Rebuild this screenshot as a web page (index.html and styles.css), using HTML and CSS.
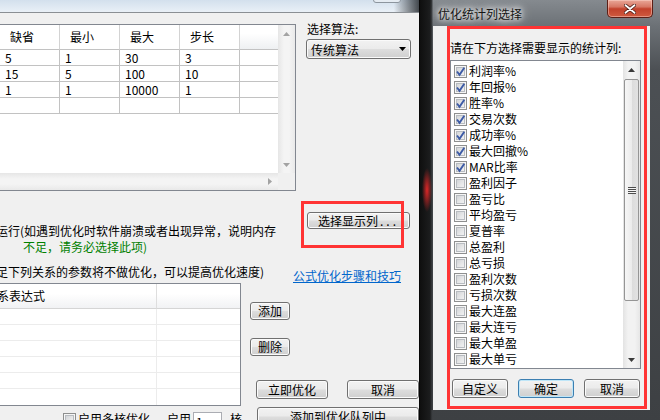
FILE: index.html
```html
<!DOCTYPE html>
<html lang="zh-CN">
<head>
<meta charset="utf-8">
<title>优化统计列选择</title>
<link rel="stylesheet" href="styles.css">
</head>
<body>
<div class="main">
  <div class="mtitle"><span class="mbtn"></span></div>
  <div class="sec1">
    <div class="grid1">
      <div class="pgrid">
        <div class="hc">缺省</div><div class="hc">最小</div><div class="hc">最大</div><div class="hc">步长</div><div class="hc hfill"></div>
        <div class="dc">5</div><div class="dc">1</div><div class="dc">30</div><div class="dc">3</div><div class="dc dl"></div>
        <div class="dc">15</div><div class="dc">5</div><div class="dc">100</div><div class="dc">10</div><div class="dc dl"></div>
        <div class="dc">1</div><div class="dc">1</div><div class="dc">10000</div><div class="dc">1</div><div class="dc dl"></div>
        <div class="dc"></div><div class="dc"></div><div class="dc"></div><div class="dc"></div><div class="dc dl"></div>
      </div>
      <div class="vsb">
        <span class="sbb"><svg width="7" height="4" viewBox="0 0 7 4"><path d="M0 4H7L3.5 0Z" fill="currentColor"/></svg></span>
        <span class="sbb"><svg width="7" height="4" viewBox="0 0 7 4"><path d="M0 0H7L3.5 4Z" fill="currentColor"/></svg></span>
      </div>
      <div class="hsb">
        <span class="sbb"><svg width="4" height="7" viewBox="0 0 4 7"><path d="M0 0V7L4 3.5Z" fill="currentColor"/></svg></span>
      </div>
      <div class="corner"></div>
    </div>
    <div class="algo">
      <div class="albl">选择算法:</div>
      <div class="combo"><span>传统算法</span><svg class="carr" width="7" height="4" viewBox="0 0 7 4"><path d="M0 0H7L3.5 4Z" fill="#000"/></svg></div>
    </div>
  </div>

  <div class="sec2">
    <div class="notes">
      <div class="n1">运行(如遇到优化时软件崩溃或者出现异常，说明内存</div>
      <div class="n2">不足，请务必选择此项)</div>
      <div class="n3">足下列关系的参数将不做优化，可以提高优化速度)</div>
    </div>
    <div class="side">
      <div class="btn colsel">选择显示列<span class="dots">...</span></div>
      <a class="link">公式优化步骤和技巧</a>
    </div>
    <div class="redbox rb1"></div>
  </div>

  <div class="sec3">
    <div class="grid2">
      <div class="h2 c1"><span class="ht">系表达式</span></div><div class="h2"></div>
      <div class="b2 c1"></div><div class="b2"></div>
      <div class="b2 c1"></div><div class="b2"></div>
      <div class="b2 c1"></div><div class="b2"></div>
      <div class="b2 c1"></div><div class="b2"></div>
      <div class="b2 c1"></div><div class="b2"></div>
      <div class="b2 c1 last"></div><div class="b2 last"></div>
    </div>
    <div class="ops">
      <div class="btn b40 add">添加</div>
      <div class="btn b40 del">删除</div>
      <div class="oprow">
        <div class="btn b72">立即优化</div>
        <div class="btn b72">取消</div>
      </div>
    </div>
  </div>

  <div class="brow">
    <span class="cb mc"></span>
    <span class="bt1">启用多核优化</span>
    <span class="bt2">启用</span>
    <span class="inp">1</span>
    <span class="bt3">核</span>
    <div class="btn queue">添加到优化队列中</div>
  </div>
</div>

<div class="dlg">
  <div class="dtitle">
    <span class="dttl">优化统计列选择</span>
    <span class="dclose"><svg width="12" height="10" viewBox="0 0 12 10"><path d="M1.5 1.2L10.5 8.8M10.5 1.2L1.5 8.8" stroke="#4a1c14" stroke-width="3.4" stroke-linecap="round"/><path d="M1.5 1.2L10.5 8.8M10.5 1.2L1.5 8.8" stroke="#fff" stroke-width="1.8" stroke-linecap="round"/></svg></span>
  </div>
  <div class="dclient">
    <div class="dlbl">请在下方选择需要显示的统计列:</div>
    <div class="lst">
      <div class="items">
        <div class="it"><span class="cb"><svg width="11" height="11" viewBox="0 0 11 11"><path d="M2 5.5L4.5 8.8L9.3 1.8" stroke="#3d5ba6" stroke-width="1.9" fill="none"/></svg></span>利润率%</div>
        <div class="it"><span class="cb"><svg width="11" height="11" viewBox="0 0 11 11"><path d="M2 5.5L4.5 8.8L9.3 1.8" stroke="#3d5ba6" stroke-width="1.9" fill="none"/></svg></span>年回报%</div>
        <div class="it"><span class="cb"><svg width="11" height="11" viewBox="0 0 11 11"><path d="M2 5.5L4.5 8.8L9.3 1.8" stroke="#3d5ba6" stroke-width="1.9" fill="none"/></svg></span>胜率%</div>
        <div class="it"><span class="cb"><svg width="11" height="11" viewBox="0 0 11 11"><path d="M2 5.5L4.5 8.8L9.3 1.8" stroke="#3d5ba6" stroke-width="1.9" fill="none"/></svg></span>交易次数</div>
        <div class="it"><span class="cb"><svg width="11" height="11" viewBox="0 0 11 11"><path d="M2 5.5L4.5 8.8L9.3 1.8" stroke="#3d5ba6" stroke-width="1.9" fill="none"/></svg></span>成功率%</div>
        <div class="it"><span class="cb"><svg width="11" height="11" viewBox="0 0 11 11"><path d="M2 5.5L4.5 8.8L9.3 1.8" stroke="#3d5ba6" stroke-width="1.9" fill="none"/></svg></span>最大回撤%</div>
        <div class="it"><span class="cb"><svg width="11" height="11" viewBox="0 0 11 11"><path d="M2 5.5L4.5 8.8L9.3 1.8" stroke="#3d5ba6" stroke-width="1.9" fill="none"/></svg></span>MAR比率</div>
        <div class="it"><span class="cb"></span>盈利因子</div>
        <div class="it"><span class="cb"></span>盈亏比</div>
        <div class="it"><span class="cb"></span>平均盈亏</div>
        <div class="it"><span class="cb"></span>夏普率</div>
        <div class="it"><span class="cb"></span>总盈利</div>
        <div class="it"><span class="cb"></span>总亏损</div>
        <div class="it"><span class="cb"></span>盈利次数</div>
        <div class="it"><span class="cb"></span>亏损次数</div>
        <div class="it"><span class="cb"></span>最大连盈</div>
        <div class="it"><span class="cb"></span>最大连亏</div>
        <div class="it"><span class="cb"></span>最大单盈</div>
        <div class="it"><span class="cb"></span>最大单亏</div>
      </div>
      <div class="lsb">
        <span class="sbb"><svg width="7" height="4" viewBox="0 0 7 4"><path d="M0 4H7L3.5 0Z" fill="currentColor"/></svg></span>
        <span class="thumb"><span class="grip"></span></span>
        <span class="sbb down"><svg width="7" height="4" viewBox="0 0 7 4"><path d="M0 0H7L3.5 4Z" fill="currentColor"/></svg></span>
      </div>
    </div>
    <div class="dbtns">
      <div class="btn b56">自定义</div>
      <div class="btn b56 focus">确定</div>
      <div class="btn b56">取消</div>
    </div>
    <div class="redbox rb2"></div>
  </div>
</div>
</body>
</html>
```

FILE: styles.css
```css
* { box-sizing: border-box; margin: 0; padding: 0; }
html, body { width: 660px; height: 420px; overflow: hidden; }
body {
  font-family: "Noto Sans CJK SC", "Noto Sans", sans-serif;
  font-size: 12px;
  color: #000;
  background: #0d0d0d;
  position: relative;
}

/* ---------- main window ---------- */
.main { width: 419px; height: 420px; background: #f0f0f0; overflow: hidden; }
.mtitle {
  position: relative;
  height: 13px;
  border-bottom: 1px solid #8a8f94;
  background: linear-gradient(90deg, rgba(0,0,0,0) 0, rgba(0,0,0,0) 94%, rgba(40,44,48,.85) 100%),
              linear-gradient(180deg, #d3e0ed 0, #e9f0f7 100%);
}
.mbtn {
  position: absolute; left: 373px; top: -4px; width: 28px; height: 7px;
  border: 1px solid #8c959e; border-radius: 3px; background: #e4ebf2;
}

.sec1 { display: flex; margin-top: 11px; height: 167px; }
.grid1 {
  width: 297px; height: 167px; margin-left: -1px;
  border: 1px solid #828790; background: #fff;
  display: grid; grid-template-columns: 278px 17px; grid-template-rows: 148px 17px;
}
.pgrid {
  display: grid;
  grid-template-columns: 60px 60px 60px 60px 38px;
  grid-template-rows: 25px repeat(4, 16px);
  align-content: start;
}
.hc {
  border-right: 1px solid #d3d3d3; border-bottom: 1px solid #c2c2c2;
  padding-left: 10px; line-height: 24px; white-space: nowrap;
  background: #fff;
}
.hfill { border-right: 0; background: linear-gradient(180deg, #fff 0, #fff 35%, #eef0f2 100%); }
.dc {
  border-right: 1px solid #c2c2c2; border-bottom: 1px solid #c2c2c2;
  padding-left: 5px; line-height: 15px; white-space: nowrap;
}
.dl { border-right: 0; }

.vsb {
  display: flex; flex-direction: column; justify-content: space-between;
  background: linear-gradient(90deg, #e6e6e6, #f4f4f4 35%, #f4f4f4 65%, #e9e9e9);
}
.hsb {
  display: flex; justify-content: flex-end;
  background: linear-gradient(180deg, #e6e6e6, #f4f4f4 35%, #f4f4f4 65%, #e9e9e9);
}
.sbb { width: 17px; height: 17px; display: flex; align-items: center; justify-content: center; color: #a3a3a3; }
.corner { background: #f0f0f0; }

.algo { margin-left: 10px; }
.albl { margin-top: -2px; padding-left: 1px; line-height: 14px; }
.combo {
  margin-top: 3px; width: 105px; height: 20px;
  display: flex; align-items: center; padding-left: 4px;
  border: 1px solid #707070; border-radius: 3px;
  background: linear-gradient(180deg, #f2f2f2 0, #ebebeb 48%, #dddddd 52%, #cfcfcf 100%);
  box-shadow: inset 0 0 0 1px #fafafa;
}
.carr { margin-left: auto; margin-right: 4px; }

/* ---------- buttons ---------- */
.btn {
  display: flex; align-items: center; justify-content: center;
  border: 1px solid #707070; border-radius: 3px;
  background: linear-gradient(180deg, #f2f2f2 0, #ebebeb 48%, #dddddd 52%, #cfcfcf 100%);
  box-shadow: inset 0 0 0 1px #fbfbfb;
  line-height: 14px; white-space: nowrap;
}
.btn.focus { border-color: #3c7fb1; box-shadow: inset 0 0 0 1px #bfe6f8; }

/* ---------- middle section ---------- */
.sec2 { position: relative; height: 92px; display: flex; }
.notes { width: 297px; margin-left: -4px; white-space: nowrap; line-height: 16px; }
.n1 { margin-top: 32px; }
.n2 { padding-left: 27px; color: #008000; }
.n3 { margin-top: 9px; }
.side { display: flex; flex-direction: column; align-items: flex-start; }
.colsel { margin-top: 21px; margin-left: 14px; width: 103px; height: 19px; }
.dots { letter-spacing: 3px; margin-left: 2px; }
.link { display: block; margin-top: 40px; line-height: 14px; color: #0066cc; text-decoration: underline; white-space: nowrap; }
.redbox { position: absolute; border: 3px solid #ff3434; }
.rb1 { left: 301px; top: 10px; width: 103px; height: 47px; }

/* ---------- lower section ---------- */
.sec3 { display: flex; height: 123px; }
.grid2 {
  width: 242px; height: 123px; margin-left: -1px;
  border: 1px solid #828790; background: #fff;
  display: grid; grid-template-columns: 157px 83px;
  grid-template-rows: 25px repeat(6, 16px);
}
.h2 {
  border-bottom: 1px solid #d5d5d5;
  background: linear-gradient(180deg, #ffffff 0, #ffffff 40%, #f1f2f4 100%);
  line-height: 23px; white-space: nowrap;
}
.h2.c1 { border-right: 1px solid #dedede; }
.ht { margin-left: -3px; }
.b2 { border-bottom: 1px solid #ececec; }
.b2.c1 { border-right: 1px solid #ececec; }
.b2.last { border-bottom: 0; }

.ops { margin-left: 9px; display: flex; flex-direction: column; align-items: flex-start; }
.b40 { width: 40px; height: 18px; }
.add { margin-top: 19px; }
.del { margin-top: 18px; }
.oprow { display: flex; gap: 19px; margin-top: 24px; margin-left: 6px; }
.b72 { width: 72px; height: 19px; }

.brow { display: flex; align-items: flex-start; height: 14px; }
.cb {
  flex: none; width: 13px; height: 13px;
  border: 1px solid #8e8f8f;
  background: linear-gradient(135deg, #c9ccd0 0, #e6e7e8 55%, #f8f8f8 100%);
  box-shadow: inset 0 0 0 1px #f6f6f6, inset 0 0 0 2px #b8bcc1;
  display: flex; align-items: center; justify-content: center;
}
.mc { margin-left: 63px; margin-top: 7px; }
.bt1 { margin-left: 2px; margin-top: 5px; line-height: 16px; white-space: nowrap; }
.bt2 { margin-left: 17px; margin-top: 5px; line-height: 16px; white-space: nowrap; }
.inp {
  margin-left: 2px; margin-top: 6px; width: 29px; height: 20px;
  border: 1px solid #abadb3; background: #fff; padding-left: 2px; line-height: 18px;
}
.bt3 { margin-left: 8px; margin-top: 5px; line-height: 16px; }
.queue { margin-left: auto; margin-right: 0; margin-top: 1px; width: 162px; height: 19px; }

/* ---------- dialog ---------- */
.dlg {
  position: absolute; left: 419px; top: 0; width: 241px; height: 420px;
  padding: 0 10px 0 13px;
  background:
    radial-gradient(5px 22px at 7px 190px, rgba(230,40,40,.95), rgba(200,30,30,0)),
    linear-gradient(90deg, #0f0f0f 0, #1c1d1e 10px, #3a3d40 12px, rgba(0,0,0,0) 13px),
    linear-gradient(180deg, #858a8f 0, #6c7176 26px, #4c5054 70px, #3d4043 100%);
  border-left: 1px solid #050505;
}
.dtitle { height: 26px; display: flex; align-items: flex-start; }
.dttl {
  margin: 7px 0 0 5px; line-height: 14px; color: #151515; white-space: nowrap;
  text-shadow: 0 0 5px #fff, 0 0 9px rgba(255,255,255,.9), 0 0 12px rgba(255,255,255,.7);
}
.dclose {
  margin-left: auto; margin-right: -3px; width: 46px; height: 18px;
  border: 1px solid #5c1e15; border-top: 0; border-radius: 0 0 5px 5px;
  background: linear-gradient(180deg, #e9a797 0, #d77764 40%, #c2412b 52%, #cf5a3f 100%);
  box-shadow: inset 0 0 0 1px rgba(255,220,210,.45);
  display: flex; align-items: center; justify-content: center;
}
.dclient { position: relative; height: 384px; background: #f0f0f0; padding-left: 17px; }
.dlbl { padding-top: 15px; line-height: 14px; white-space: nowrap; }
.lst {
  margin-top: 5px; width: 191px; height: 309px;
  border: 1px solid #828790; background: #fff;
  display: grid; grid-template-columns: 1fr 17px;
}
.items { padding: 2px 0 0 3px; overflow: hidden; }
.it { display: flex; align-items: center; height: 16px; white-space: nowrap; line-height: 16px; }
.it .cb { margin-right: 2px; }
.lsb {
  display: flex; flex-direction: column;
  background: linear-gradient(90deg, #e3e3e3, #f2f2f2 30%, #f2f2f2 70%, #e6e6e6);
}
.lsb .sbb { color: #3a3a3a; flex: none; }
.thumb {
  margin: 1px 1px 0; height: 222px; flex: none;
  border: 1px solid #959595; border-radius: 2px;
  background: linear-gradient(90deg, #f6f6f6, #ececec 50%, #dcdcdc 52%, #e2e2e2);
  display: flex; align-items: center; justify-content: center;
}
.grip { width: 8px; height: 7px; background: repeating-linear-gradient(180deg, #4c4c4c 0 1px, #f4f4f4 1px 2px); }
.lsb .down { margin-top: auto; }
.dbtns { display: flex; gap: 10px; margin: 10px 0 0 2px; }
.b56 { width: 56px; height: 19px; }
.rb2 { left: 14px; top: 0; width: 200px; height: 383px; }
```
